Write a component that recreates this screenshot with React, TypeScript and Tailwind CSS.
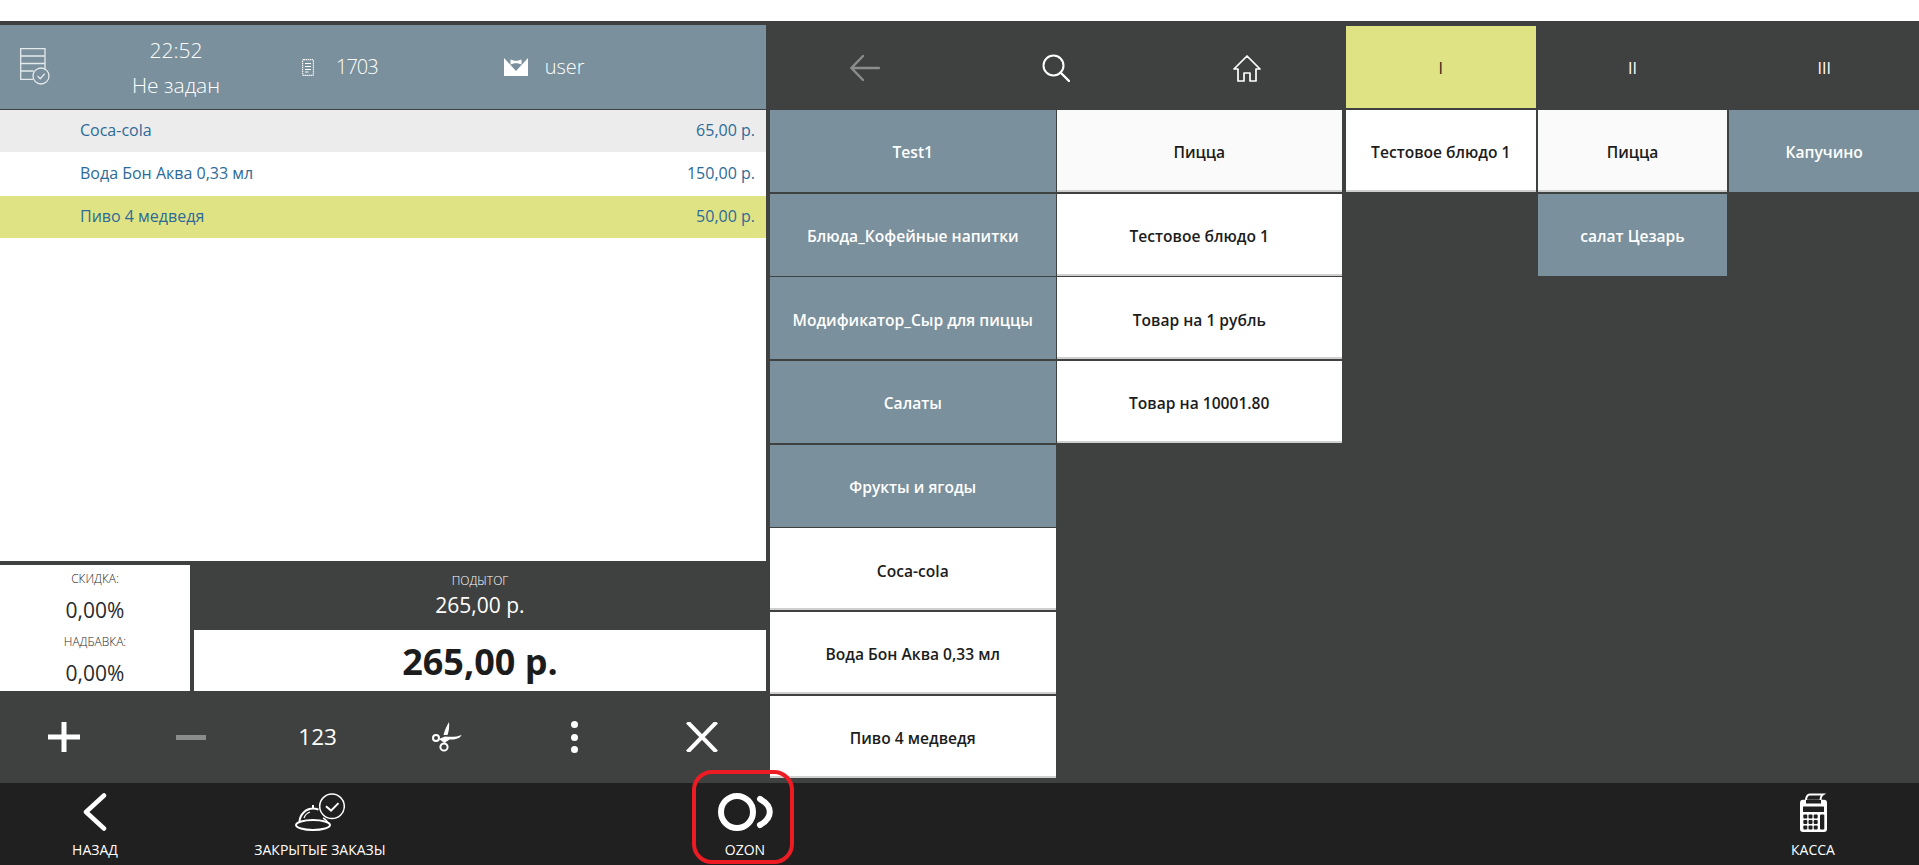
const ITEM_H = "h-[82px]";

function TableIcon() {
  return (
    <svg width="32" height="38" viewBox="0 0 32 38" fill="none" stroke="#e4eaec" strokeWidth="1.3">
      <path d="M25 22V.7H.7v30.6H13M.7 8h24.3M.7 15.5h24.3M.7 23h13" />
      <circle cx="21" cy="28" r="8" />
      <path d="M17.500 28l2.700 2.700 4.500-5" />
    </svg>
  );
}

function NoteIcon() {
  return (
    <svg width="12" height="17" viewBox="0 0 12 17" fill="none" stroke="#fff" strokeWidth="1.2">
      <rect x=".6" y=".6" width="10.8" height="15.8" rx="1" strokeDasharray="1.4 .6" />
      <path d="M3 4.500h6M3 7.500h6M3 10.500h6M3 13h3.500" />
    </svg>
  );
}

function WaiterIcon() {
  return (
    <svg width="24" height="18" viewBox="0 0 24 18" fill="#fff">
      <path d="M0 0l12 13L24 0v18H0z" />
      <path d="M6.500 1.500l4 1.200h3l4-1.200v5l-4-1.300h-3l-4 1.300z" />
    </svg>
  );
}

function BackArrow() {
  return (
    <svg width="30" height="26" viewBox="0 0 30 26" fill="none" stroke="#8b8d8c" strokeWidth="2.4" strokeLinecap="round">
      <path d="M13 1L1.500 13 13 25M2 13h27" />
    </svg>
  );
}

function SearchIcon() {
  return (
    <svg width="28" height="28" viewBox="0 0 28 28" fill="none" stroke="#fff" strokeWidth="2">
      <circle cx="11.500" cy="11.500" r="10" />
      <path d="M18.500 18.500l8.500 8.500" strokeWidth="2.4" strokeLinecap="round" />
    </svg>
  );
}

function HomeIcon() {
  return (
    <svg width="28" height="27" viewBox="0 0 28 27" fill="none" stroke="#fff" strokeWidth="1.7" strokeLinejoin="round">
      <path d="M1 14L14 1l13 13h-4v12h-6v-8h-6v8H5V14z" />
    </svg>
  );
}

function PlusIcon() {
  return (
    <svg width="32" height="30" viewBox="0 0 32 30" fill="#fff">
      <path d="M13.500 0h5v12.500H32v5H18.500V30h-5V17.500H0v-5h13.500z" />
    </svg>
  );
}

function MinusIcon() {
  return <div className="w-[30px] h-[5px] bg-[#8b8d8c]" />;
}

function ScissorsIcon() {
  return (
    <svg width="30" height="30" viewBox="0 0 30 30" fill="none" stroke="#fff">
      <circle cx="4" cy="16" r="3" strokeWidth="2" />
      <circle cx="12" cy="25" r="3.600" strokeWidth="2" />
      <path d="M7 17l6-2.500c6 .5 12 .5 16.500-1.500-1 3-6 5-12 4.500l-5 3.500-1.500-1z" fill="#fff" stroke="none" />
      <path d="M11.500 13c1-4 3-9 5.500-13 .5 4 0 9-1.500 13z" fill="#fff" stroke="none" />
    </svg>
  );
}

function DotsIcon() {
  return (
    <div className="flex flex-col gap-[5.500px]">
      <div className="size-[7px] rounded-full bg-white" />
      <div className="size-[7px] rounded-full bg-white" />
      <div className="size-[7px] rounded-full bg-white" />
    </div>
  );
}

function CloseIcon() {
  return (
    <svg width="32" height="30" viewBox="0 0 32 30" fill="none" stroke="#fff" strokeWidth="4">
      <path d="M1.500 0L30.500 30M30.500 0L1.500 30" />
    </svg>
  );
}

function ChevronIcon() {
  return (
    <svg width="24" height="38" viewBox="0 0 24 38" fill="none" stroke="#fff" strokeWidth="4.500" strokeLinecap="round" strokeLinejoin="round">
      <path d="M21 2.500L3 19l18 16.500" />
    </svg>
  );
}

function BellIcon() {
  return (
    <svg width="50" height="38" viewBox="0 0 50 38" fill="none" stroke="#fff" strokeWidth="1.500">
      <circle cx="37" cy="13.300" r="12.300" />
      <path d="M31 13.300l5 4.300 7.500-7.500" strokeWidth="2" />
      <path d="M4.500 29c0-7.500 6.500-13.500 13.500-13.500 2 0 4 .5 5.500 1.200M18 15.500V12" strokeWidth="2" />
      <path d="M28 25c2 1 4 2.500 4.500 4" strokeWidth="1.500" />
      <path d="M9 25c1-3 3-5 6-6" strokeWidth="1.200" />
      <ellipse cx="18" cy="32" rx="17" ry="5" strokeWidth="2" />
    </svg>
  );
}

function OzonIcon() {
  return (
    <svg width="56" height="38" viewBox="0 0 56 38" fill="none" stroke="#fff" strokeWidth="6" strokeLinecap="round">
      <circle cx="20" cy="19" r="16" />
      <path d="M43 6c13 7 13 19 0 26" />
    </svg>
  );
}

function CalcIcon() {
  const keys = [0, 1, 2];
  return (
    <svg width="27" height="39" viewBox="0 0 27 39">
      <path d="M6 8c0-3 1-6.500 4-6.500h13c-1.500 1-2.500 3-2.500 6.500" fill="none" stroke="#fff" strokeWidth="2" />
      <rect y="6.700" width="27" height="32.300" rx="3" fill="#fff" />
      <rect x="6" y="7" width="15" height="3.500" fill="#202020" />
      <rect x="3" y="13.500" width="21" height="5.500" rx=".5" fill="#202020" />
      {keys.map((r) =>
        keys.map((c) => (
          <rect key={`${r}-${c}`} x={3.3 + c * 5.2} y={21.5 + r * 5.5} width="4" height="4" rx="1" fill="#202020" />
        )),
      )}
      <rect x="20" y="21.500" width="4.300" height="15" rx="1" fill="#202020" />
    </svg>
  );
}

function OrderRow({ name, price, className }: { name: string; price: string; className: string }) {
  return (
    <div className={`flex items-center justify-between pl-[80px] pr-[11px] pb-[2px] text-[16px] text-[#2c6a98] ${className}`}>
      <span>{name}</span>
      <span>{price}</span>
    </div>
  );
}

function Tile({ label, variant }: { label?: string; variant?: "blue" | "white" | "soft" }) {
  if (!label) return <div className={ITEM_H} />;
  const look =
    variant === "blue"
      ? "bg-[#7a909c] text-white"
      : variant === "soft"
        ? "bg-[#fafafa] text-[#1c1c1c] shadow-[inset_0_-2px_0_#cfcfcf]"
        : "bg-white text-[#1c1c1c] shadow-[inset_0_-2px_0_#cfcfcf]";
  return (
    <div className={`${ITEM_H} pt-[4px] flex items-center justify-center text-[15.6px] font-semibold ${look}`}>{label}</div>
  );
}

function ToolCell({ children }: { children: React.ReactNode }) {
  return <div className="flex items-center justify-center">{children}</div>;
}

function BarItem({ label, icon, className }: { label: string; icon: React.ReactNode; className: string }) {
  return (
    <div className={`flex flex-col items-center pt-[10px] ${className}`}>
      <div className="h-[38px] flex items-center justify-center">{icon}</div>
      <span className="mt-[9px] text-[14px] leading-[20px] text-white">{label}</span>
    </div>
  );
}

export default function App() {
  return (
    <div className="relative w-full h-[865px] overflow-hidden flex flex-col bg-white font-['Open_Sans',sans-serif]">
      <div className="h-[21px] bg-white" />
      <div className="flex-1 flex bg-[#3f4140] min-h-0">
        {/* left: order */}
        <div className="w-[766px] shrink-0 pt-[4px] flex flex-col">
          <div className="h-[84px] bg-[#7a909c] flex items-center text-white font-light">
            <div className="w-[116px] pl-[20px]">
              <TableIcon />
            </div>
            <div className="w-[120px] pt-[2px] flex flex-col items-center text-[21px] leading-[35px]">
              <span>22:52</span>
              <span>Не задан</span>
            </div>
            <div className="ml-[66px] flex items-center gap-[22px] text-[20px] tracking-[-1px]">
              <NoteIcon />
              <span>1703</span>
            </div>
            <div className="ml-[126px] flex items-center gap-[17px] text-[20px]">
              <WaiterIcon />
              <span>user</span>
            </div>
          </div>
          <div className="mt-px h-[451px] bg-white flex flex-col">
            <OrderRow name="Coca-cola" price="65,00 р." className="h-[42px] bg-[#ececec]" />
            <OrderRow name="Вода Бон Аква 0,33 мл" price="150,00 р." className="h-[44px] bg-white" />
            <OrderRow name="Пиво 4 медведя" price="50,00 р." className="h-[42px] bg-[#e0e384]" />
          </div>
          <div className="mt-[4px] h-[126px] flex gap-[4px]">
            <div className="w-[190px] bg-white flex flex-col items-center text-[#2a2a2a] font-light">
              <span className="text-[12px] leading-[16px] mt-[6px]">СКИДКА:</span>
              <span className="text-[21px] leading-[28px] mt-[9px] font-normal">0,00%</span>
              <span className="text-[12px] leading-[16px] mt-[10px]">НАДБАВКА:</span>
              <span className="text-[21px] leading-[28px] mt-[9px] font-normal">0,00%</span>
            </div>
            <div className="flex-1 flex flex-col">
              <div className="h-[65px] flex flex-col items-center text-white">
                <span className="text-[12px] leading-[16px] mt-[8px] font-light">ПОДЫТОГ</span>
                <span className="text-[21px] leading-[28px] mt-[2px]">265,00 р.</span>
              </div>
              <div className="flex-1 bg-white pt-[2px] flex items-center justify-center text-[36px] font-bold text-[#1c1c1c]">
                265,00 р.
              </div>
            </div>
          </div>
          <div className="h-[92px] grid grid-cols-6">
            <ToolCell>
              <PlusIcon />
            </ToolCell>
            <ToolCell>
              <MinusIcon />
            </ToolCell>
            <ToolCell>
              <span className="pr-[3px] text-[22.500px] font-medium text-white">123</span>
            </ToolCell>
            <ToolCell>
              <ScissorsIcon />
            </ToolCell>
            <ToolCell>
              <DotsIcon />
            </ToolCell>
            <ToolCell>
              <CloseIcon />
            </ToolCell>
          </div>
        </div>

        {/* right: menu */}
        <div className="flex-1 pl-[4px] pt-[5px] flex gap-[4px]">
          <div className="w-[572px] shrink-0">
            <div className="h-[82px] pt-[2px] grid grid-cols-3">
              <ToolCell>
                <BackArrow />
              </ToolCell>
              <ToolCell>
                <SearchIcon />
              </ToolCell>
              <ToolCell>
                <HomeIcon />
              </ToolCell>
            </div>
            <div className="mt-[2px] grid grid-cols-2 gap-x-px gap-y-[1.7px]">
              <Tile label="Test1" variant="blue" />
              <Tile label="Пицца" variant="soft" />
              <Tile label="Блюда_Кофейные напитки" variant="blue" />
              <Tile label="Тестовое блюдо 1" />
              <Tile label="Модификатор_Сыр для пиццы" variant="blue" />
              <Tile label="Товар на 1 рубль" />
              <Tile label="Салаты" variant="blue" />
              <Tile label="Товар на 10001.80" />
              <Tile label="Фрукты и ягоды" variant="blue" />
              <Tile />
              <Tile label="Coca-cola" />
              <Tile />
              <Tile label="Вода Бон Аква 0,33 мл" />
              <Tile />
              <Tile label="Пиво 4 медведя" />
              <Tile />
            </div>
          </div>
          <div className="flex-1">
            <div className="h-[82px] grid grid-cols-3 gap-x-[2px] text-[16px]">
              <div className="bg-[#e0e384] text-[#1c1c1c] pt-[2px] flex items-center justify-center">I</div>
              <div className="text-white pt-[2px] flex items-center justify-center">II</div>
              <div className="text-white pt-[2px] flex items-center justify-center">III</div>
            </div>
            <div className="mt-[2px] grid grid-cols-3 gap-x-[2px] gap-y-[1.7px]">
              <Tile label="Тестовое блюдо 1" />
              <Tile label="Пицца" variant="soft" />
              <Tile label="Капучино" variant="blue" />
              <Tile />
              <Tile label="салат Цезарь" variant="blue" />
              <Tile />
            </div>
          </div>
        </div>
      </div>

      {/* bottom bar */}
      <div className="h-[82px] shrink-0 bg-[#202020] flex">
        <BarItem label="НАЗАД" icon={<ChevronIcon />} className="w-[190px]" />
        <BarItem label="ЗАКРЫТЫЕ ЗАКАЗЫ" icon={<BellIcon />} className="w-[260px]" />
        <BarItem label="OZON" icon={<OzonIcon />} className="w-[190px] ml-[200px]" />
        <BarItem label="КАССА" icon={<CalcIcon />} className="w-[190px] ml-auto mr-[11px]" />
      </div>

      {/* highlight marker over the screenshot */}
      <div className="absolute left-[692px] top-[770px] w-[102px] h-[94px] rounded-[20px] border-[4px] border-[#ed1c24]" />
    </div>
  );
}
